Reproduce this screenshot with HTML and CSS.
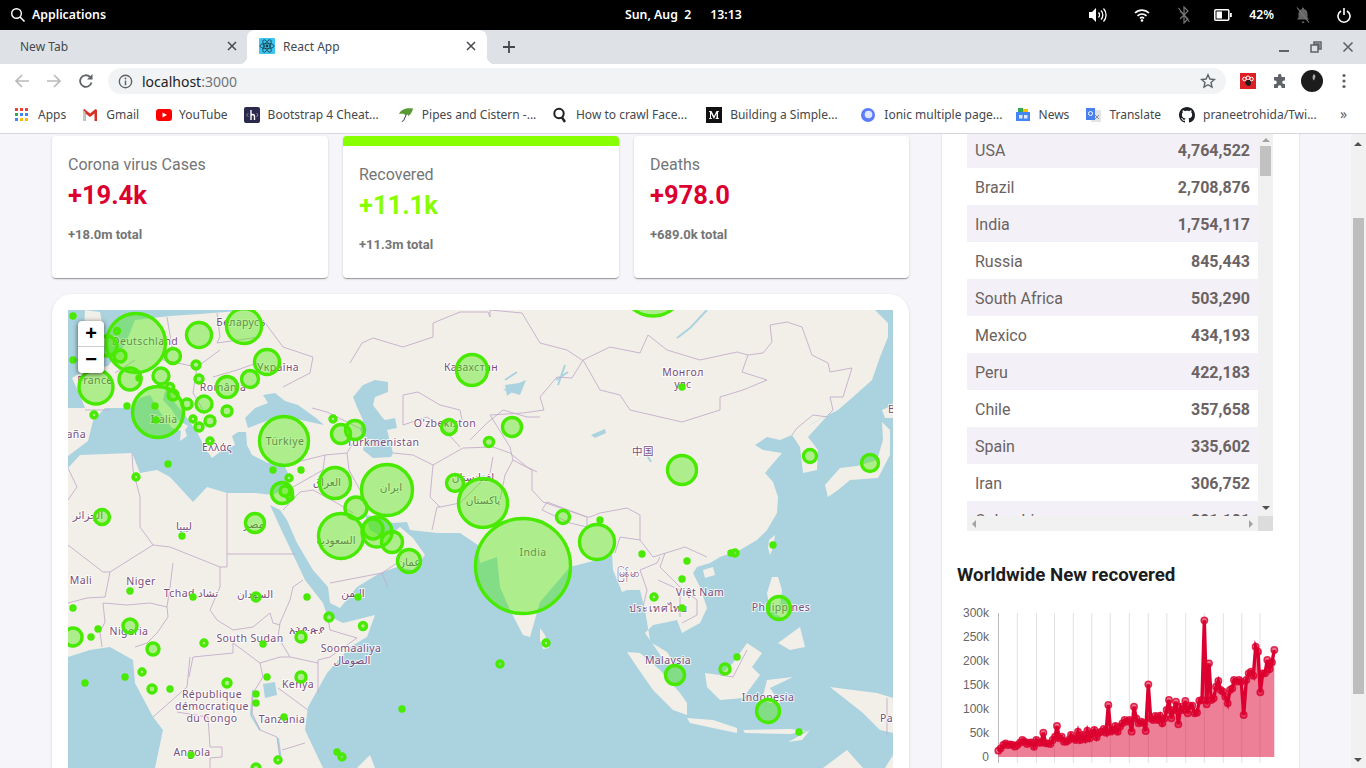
FILE: index.html
```html
<!DOCTYPE html>
<html lang="en">
  <head>
    <meta charset="UTF-8" />
    <title>React App</title>
    <link rel="stylesheet" href="styles.css">
  </head>

  <body>
    <div class="topbar">
      <div class="topbar-left">
        <svg class="ico" width="16" height="16" viewBox="0 0 16 16"><circle cx="6.5" cy="6.5" r="4.8" fill="none" stroke="#fff" stroke-width="1.4"/><path d="M10 10l4.5 4.5" stroke="#fff" stroke-width="1.6"/></svg>
        <span class="apps-label">Applications</span>
      </div>
      <div class="clock"><span>Sun, Aug&nbsp; 2</span><span>13:13</span></div>
      <div class="status">
        <svg class="st-vol" width="20" height="18" viewBox="0 0 20 18"><path d="M1 6h3l4-4v14l-4-4H1z" fill="#fff"/><path d="M10.5 6.5a3.500 3.500 0 0 1 0 5M13 4.500a6.500 6.500 0 0 1 0 9M15.500 2.500a9.500 9.500 0 0 1 0 13" fill="none" stroke="#fff" stroke-width="1.3"/></svg>
        <svg class="st-wifi" width="16" height="14" viewBox="0 0 16 14"><path d="M1 5a10 10 0 0 1 14 0M3.500 7.800a6.500 6.500 0 0 1 9 0M6 10.300a3 3 0 0 1 4 0" fill="none" stroke="#fff" stroke-width="1.700"/><circle cx="8" cy="12.500" r="1.300" fill="#fff"/></svg>
        <svg class="st-bt" width="14" height="18" viewBox="0 0 14 18"><path d="M3 5l8 8-4 4V1l4 4-8 8" fill="none" stroke="#777" stroke-width="1.200"/><path d="M1.500 2l11 14" stroke="#777" stroke-width="1.200"/></svg>
        <svg class="st-bat" width="18" height="12" viewBox="0 0 18 12"><rect x="0.800" y="0.800" width="14" height="10.400" rx="1" fill="none" stroke="#fff" stroke-width="1.500"/><rect x="2.500" y="2.500" width="5.500" height="7" fill="#fff"/><rect x="16" y="4" width="1.800" height="4" fill="#fff"/></svg>
        <span class="st-pct">42%</span>
        <svg class="st-bell" width="16" height="18" viewBox="0 0 16 18"><path d="M8 1.500a1 1 0 0 1 1 1v.6c2.500.6 3.500 2.600 3.500 5v3.400l1.500 2H2l1.500-2V8.100c0-2.400 1-4.400 3.500-5v-.6a1 1 0 0 1 1-1zM6.500 15.500h3a1.500 1.500 0 0 1-3 0z" fill="#666"/><path d="M2 1.500l12 15" stroke="#777" stroke-width="1.200"/></svg>
        <svg class="st-power" width="14" height="16" viewBox="0 0 14 16"><path d="M4 4a6 6 0 1 0 6 0" fill="none" stroke="#fff" stroke-width="1.600"/><path d="M7 1v7" stroke="#fff" stroke-width="1.600"/></svg>
      </div>
    </div>

    <div class="tabstrip">
      <div class="tab">
        <span class="tab-title">New Tab</span>
        <svg class="tab-x" width="10" height="10" viewBox="0 0 10 10"><path d="M1 1l8 8M9 1l-8 8" stroke="#45484c" stroke-width="1.500"/></svg>
      </div>
      <div class="tab tab-active">
        <svg class="favicon" width="16" height="16" viewBox="0 0 16 16"><rect width="16" height="16" rx="1" fill="#3cc5ef"/><g fill="none" stroke="#17404f" stroke-width=".8"><ellipse cx="8" cy="8" rx="7" ry="2.700"/><ellipse cx="8" cy="8" rx="7" ry="2.700" transform="rotate(60 8 8)"/><ellipse cx="8" cy="8" rx="7" ry="2.700" transform="rotate(120 8 8)"/></g><circle cx="8" cy="8" r="1.400" fill="#17404f"/></svg>
        <span class="tab-title">React App</span>
        <svg class="tab-x" width="10" height="10" viewBox="0 0 10 10"><path d="M1 1l8 8M9 1l-8 8" stroke="#45484c" stroke-width="1.500"/></svg>
      </div>
      <svg class="new-tab" width="14" height="14" viewBox="0 0 14 14"><path d="M7 1v12M1 7h12" stroke="#45484c" stroke-width="1.800"/></svg>
      <div class="win-btns">
        <svg width="12" height="12" viewBox="0 0 12 12"><path d="M1 10h10" stroke="#5f6368" stroke-width="2"/></svg>
        <svg width="12" height="12" viewBox="0 0 12 12"><path d="M4 1h7v7H9V3H4zM1 4h7v7H1z" fill="none" stroke="#5f6368" stroke-width="1.500"/></svg>
        <svg width="12" height="12" viewBox="0 0 12 12"><path d="M1.500 1.500l9 9M10.500 1.500l-9 9" stroke="#5f6368" stroke-width="1.600"/></svg>
      </div>
    </div>

    <div class="toolbar">
      <svg class="nav-ico" width="16" height="16" viewBox="0 0 16 16"><path d="M15 8H2M8 2L2 8l6 6" fill="none" stroke="#b8babd" stroke-width="1.700"/></svg>
      <svg class="nav-ico" width="16" height="16" viewBox="0 0 16 16"><path d="M1 8h13M8 2l6 6-6 6" fill="none" stroke="#b8babd" stroke-width="1.700"/></svg>
      <svg class="nav-ico" width="16" height="16" viewBox="0 0 16 16"><path d="M13.500 9.500A5.800 5.800 0 1 1 12 4" fill="none" stroke="#5f6368" stroke-width="1.800"/><path d="M14.500 1v5.500H9z" fill="#5f6368"/></svg>
      <div class="omnibox">
        <svg width="15" height="15" viewBox="0 0 16 16"><circle cx="8" cy="8" r="6.600" fill="none" stroke="#5f6368" stroke-width="1.500"/><path d="M8 7v5" stroke="#5f6368" stroke-width="1.600"/><circle cx="8" cy="4.800" r="1" fill="#5f6368"/></svg>
        <span class="url">localhost<span class="url-port">:3000</span></span>
        <svg class="star" width="16" height="16" viewBox="0 0 16 16"><path d="M8 1.800l1.900 4.200 4.500.5-3.400 3 1 4.500L8 11.700 4 14l1-4.500-3.400-3 4.500-.5z" fill="none" stroke="#5f6368" stroke-width="1.400"/></svg>
      </div>
      <svg class="ext-red" width="16" height="16" viewBox="0 0 16 16"><rect width="16" height="16" fill="#dd1f26"/><circle cx="8" cy="5" r="2" fill="none" stroke="#fff"/><circle cx="4.500" cy="6" r="1.800" fill="none" stroke="#fff"/><circle cx="11.500" cy="6" r="1.800" fill="none" stroke="#fff"/><path d="M5 10l2-3h3l1 3-1 3-3-.5z" fill="#1b1b1b"/></svg>
      <svg class="puzzle" width="16" height="16" viewBox="0 0 16 16"><path d="M6 2.500a1.800 1.800 0 0 1 3.500 0V4H13v3.500h-1a1.800 1.800 0 0 0 0 3.600h1V15H9.500v-1a1.800 1.800 0 0 0-3.600 0v1H2v-3.800h1a1.800 1.800 0 0 0 0-3.600H2V4h4z" fill="#5f6368"/></svg>
      <svg class="avatar" width="22" height="22" viewBox="0 0 22 22"><circle cx="11" cy="11" r="11" fill="#1c1c1c"/><path d="M13 4c1.500 1 1.800 3 .8 4.500l-.8 2-1-1c-.8-2-.5-4 1-5.500z" fill="#aaa"/></svg>
      <svg class="dots" width="4" height="16" viewBox="0 0 4 16"><circle cx="2" cy="2.500" r="1.600" fill="#5f6368"/><circle cx="2" cy="8" r="1.600" fill="#5f6368"/><circle cx="2" cy="13.500" r="1.600" fill="#5f6368"/></svg>
    </div>

    <div class="bookmarks">
      <a class="bm bm-apps">
        <svg width="14" height="14" viewBox="0 0 14 14"><g fill="#ea4335"><rect x="0" y="0" width="3" height="3"/><rect x="5" y="0" width="3" height="3"/><rect x="10" y="0" width="3" height="3"/></g><g fill="#34a853"><rect x="0" y="5" width="3" height="3"/></g><g fill="#4285f4"><rect x="5" y="5" width="3" height="3"/><rect x="10" y="5" width="3" height="3"/><rect x="0" y="10" width="3" height="3"/></g><g fill="#fbbc05"><rect x="5" y="10" width="3" height="3"/><rect x="10" y="10" width="3" height="3"/></g></svg>
        Apps
      </a>
      <a class="bm">
        <svg width="16" height="14" viewBox="0 0 16 14"><path d="M1 2v11h2.500V5.500L8 9l4.500-3.500V13H15V2l-1.500-1L8 5.500 2.500 1z" fill="#d93025"/><path d="M1 13V2l2.500 2v9z" fill="#c5c5c5"/></svg>
        Gmail
      </a>
      <a class="bm">
        <svg width="16" height="12" viewBox="0 0 16 12"><rect width="16" height="12" rx="3" fill="#f00"/><path d="M6.500 3.500v5L11 6z" fill="#fff"/></svg>
        YouTube
      </a>
      <a class="bm bm-long">
        <svg width="16" height="16" viewBox="0 0 16 16"><rect width="16" height="16" rx="2" fill="#2b2a4c"/><path d="M7 3v10M7 8.500c1-1.500 3.500-1.500 3.500 1V13" fill="none" stroke="#fff" stroke-width="1.400"/><path d="M4.500 6L2.500 8l2 2M12.500 6l1.500 2-1.500 2" fill="none" stroke="#9a99b5" stroke-width=".8"/></svg>
        Bootstrap 4 Cheat...
      </a>
      <a class="bm bm-long">
        <svg width="16" height="17" viewBox="0 0 17 17"><path d="M1 8c2-5 8-7 15-6-1 4-3 7-5 8-1-2-2-2-3-1-1-1-3-2-7-1z" fill="#5b9a32"/><path d="M9 8l-3 7-2 1" fill="none" stroke="#333" stroke-width="1"/></svg>
        Pipes and Cistern -...
      </a>
      <a class="bm bm-long">
        <svg width="16" height="16" viewBox="0 0 15 16"><circle cx="6.500" cy="6.500" r="4.700" fill="none" stroke="#202124" stroke-width="2"/><path d="M9.500 10.500l3 4.500" stroke="#202124" stroke-width="2.400"/></svg>
        How to crawl Face...
      </a>
      <a class="bm bm-long">
        <svg width="16" height="16" viewBox="0 0 16 16"><rect width="16" height="16" fill="#111"/><path d="M3 4h2.500L8 9l2.500-5H13v.6l-1 .6v5.600l1 .6v.6H9.500v-.6l1-.6V6.500L8 12 5 6.500v4.300l1 .6v.6H3v-.6l1-.6V5.200l-1-.6z" fill="#fff"/></svg>
        Building a Simple...
      </a>
      <a class="bm bm-long">
        <svg width="16" height="16" viewBox="0 0 15 16"><circle cx="7.500" cy="8" r="7" fill="#5c7cfa"/><circle cx="8" cy="7.500" r="3.800" fill="#dfe6ff"/></svg>
        Ionic multiple page...
      </a>
      <a class="bm">
        <svg width="16" height="16" viewBox="0 0 16 16"><path d="M3 2h10v5H3z" fill="#fbbc05"/><path d="M3 1h5v4H3z" fill="#34a853"/><rect x="1" y="5" width="14" height="9" fill="#4285f4"/><rect x="4" y="8" width="3.500" height="3.500" fill="#dfe8ff"/><rect x="9" y="8" width="3.500" height="3.500" fill="#dfe8ff"/></svg>
        News
      </a>
      <a class="bm">
        <svg width="16" height="16" viewBox="0 0 16 16"><rect x="6" y="3" width="10" height="12" fill="#e2e3e6"/><path d="M1 1h9v12H1z" fill="#4a80ee"/><circle cx="5.500" cy="6.500" r="2" fill="none" stroke="#fff"/><path d="M10 8l4 4M14 8l-4 4" stroke="#777" stroke-width=".8"/></svg>
        Translate
      </a>
      <a class="bm">
        <svg width="16" height="16" viewBox="0 0 16 16"><path fill="#1b1f23" d="M8 0C3.580 0 0 3.580 0 8c0 3.540 2.290 6.530 5.470 7.590.4.070.55-.17.55-.38 0-.19-.01-.82-.01-1.490-2.010.37-2.530-.49-2.690-.94-.09-.23-.48-.94-.82-1.130-.28-.15-.68-.52-.01-.53.63-.01 1.080.58 1.230.82.720 1.210 1.870.87 2.330.66.070-.52.280-.87.510-1.070-1.780-.2-3.640-.89-3.640-3.950 0-.87.310-1.590.820-2.150-.08-.2-.36-1.020.08-2.120 0 0 .67-.21 2.200.82.640-.18 1.320-.27 2-.27s1.360.09 2 .27c1.530-1.040 2.200-.82 2.200-.82.440 1.100.160 1.920.080 2.120.51.560.82 1.270.82 2.150 0 3.070-1.870 3.750-3.650 3.950.29.250.54.730.54 1.480 0 1.070-.01 1.930-.01 2.200 0 .210.150.460.550.380A8.010 8.010 0 0 0 16 8c0-4.420-3.580-8-8-8z"/></svg>
        praneetrohida/Twi...
      </a>
      <span class="bm-more">»</span>
    </div>

    <div class="page">
      <main class="main">
        <div class="cards">
          <div class="card">
            <div class="card-label">Corona virus Cases</div>
            <div class="card-value crimson">+19.4k</div>
            <div class="card-total">+18.0m total</div>
          </div>
          <div class="card card-recovered">
            <div class="card-label">Recovered</div>
            <div class="card-value green">+11.1k</div>
            <div class="card-total">+11.3m total</div>
          </div>
          <div class="card">
            <div class="card-label">Deaths</div>
            <div class="card-value crimson">+978.0</div>
            <div class="card-total">+689.0k total</div>
          </div>
        </div>

        <div class="map-card">
          <div class="map">
            <svg id="worldmap" class="map-svg" width="825" height="458" viewBox="68 310 825 458">
              <rect class="water" x="68" y="310" width="825" height="458"/>
              <g class="land">
                <polygon points="68,408 85,408 80,395 72,378 85,370 108,366 125,345 135,320 170,316 200,314 225,312 250,310 875,310 888,323 888,337 880,357 872,380 853,397 838,410 828,415 813,423 800,432 792,435 780,440 767,437 755,445 763,450 782,453 770,467 765,473 773,482 778,497 777,513 767,530 757,540 740,550 720,557 710,563 697,567 693,573 700,587 707,608 700,623 682,633 677,620 663,623 653,625 645,633 652,643 667,652 677,667 665,662 650,640 645,610 640,590 627,590 622,592 613,570 612,553 597,560 570,567 540,602 530,637 523,635 510,610 500,587 497,557 480,563 478,545 460,533 437,533 410,530 407,522 393,523 377,517 365,515 370,530 382,537 393,533 400,527 413,538 425,555 413,570 397,567 380,573 357,587 340,608 330,603 328,587 313,570 297,543 287,520 280,510 270,505 280,527 297,563 305,580 323,603 327,615 343,623 375,615 367,637 350,647 327,673 308,707 305,730 313,747 323,768 155,768 163,730 153,717 135,683 133,660 110,647 90,650 68,657"/>
                <!-- islands -->
                <polygon points="85,310 100,312 106,345 78,350 84,330"/>
                <polygon points="792,435 800,447 803,473 817,470 818,450 808,437 828,415"/>
                <polygon points="825,485 840,468 857,466 877,460 883,440 882,422 890,430 890,455 878,478 850,480 838,490 828,497"/>
                <polygon points="882,410 893,405 893,418 885,418"/>
                <polygon points="769,540 775,535 773,548 770,555 768,548"/>
                <polygon points="703,570 713,567 715,575 705,578"/>
                <polygon points="767,593 772,577 778,577 782,590 780,607 790,615 785,620 770,610"/>
                <polygon points="778,643 800,627 805,647 790,650"/>
                <polygon points="627,652 640,653 660,670 680,693 687,703 687,715 673,710 653,690 637,667"/>
                <polygon points="687,718 713,720 737,728 737,733 713,728 690,723"/>
                <polygon points="743,730 790,729 807,731 790,734 745,733"/>
                <polygon points="705,673 707,687 720,700 743,698 760,675 752,667 762,653 747,643 733,663 720,675"/>
                <polygon points="767,680 793,677 770,688 780,703 770,703 762,700"/>
                <polygon points="830,687 853,690 877,693 893,698 893,733 880,730 863,713"/>
                <polygon points="788,742 810,730 802,740"/>
                <polygon points="823,768 847,750 863,768"/>
                <polygon points="885,768 893,755 893,768"/>
                <polygon points="540,628 545,635 549,648 543,649 540,640"/>
                <polygon points="357,768 370,755 375,768"/>
                <polygon points="151,448 171,450 168,456 155,453"/>
                <polygon points="131,420 136,420 137,438 131,438"/>
                <polygon points="222,461 240,460 240,463 224,464"/>
                <polygon points="268,456 278,452 276,458"/>
              </g>
              <g class="water-over">
                <!-- mediterranean, black sea, caspian, lakes -->
                <polygon points="68,456 88,441 93,421 105,408 131,408 140,398 150,395 160,412 172,428 181,431 180,441 187,436 185,430 188,426 178,420 172,410 163,400 165,391 170,392 175,403 187,418 197,432 205,448 212,458 220,452 235,445 232,436 238,432 246,432 247,445 252,455 268,463 283,463 288,473 282,490 273,495 255,493 227,493 207,487 193,502 170,477 157,470 140,473 132,453 80,455 68,468"/>
                <polygon points="245,418 255,408 268,403 263,395 275,393 285,401 298,405 316,418 324,425 301,420 281,415 261,423 248,428"/>
                <polygon points="353,397 363,385 375,380 388,382 388,392 375,397 373,405 382,417 385,420 395,418 397,428 387,430 393,453 391,457 373,458 363,450 365,440 360,430 363,420 357,407"/>
                <polygon points="505,385 520,383 523,388 512,392 507,396"/>
                <polygon points="263,684 275,682 277,695 265,698"/>
                <polygon points="591,435 605,429 606,433 595,438"/>
                <polygon points="503,390 526,380 520,395"/>
                <path class="lake-line" d="M677,338L690,328L707,310M253,690L251,715L260,730M278,738L281,760M505,380L517,372M558,385L565,365M568,372L556,380M644,450L651,462"/>
              </g>
              <path class="borders" d="M583,360L610,347L640,353L648,335L667,350L700,360L737,352L748,355L742,372L767,380L743,390L720,397L720,410L682,422L630,410L620,395L600,390L583,360M748,355L763,353L772,342L770,325L787,322L802,327L812,355L828,363L830,372L852,368L843,397L830,397L833,410L828,415M828,417L813,415L797,428L792,435M583,360L572,378L557,377L540,397L544,410L523,413L490,415L510,447L513,460L532,470L532,490L543,502L587,517L590,517L600,513L627,508L640,515L640,540L653,557L685,547L707,557M542,510L547,502L587,517L587,527L570,523L542,510M640,540L620,537L615,553M660,557L657,563L640,570L647,590L643,607M665,553L660,567L680,587L697,600L697,615L682,623M658,580L680,590L680,617M513,460L505,475L500,500M720,675L733,677L747,650M887,698L887,735M350,363L362,343L373,338L403,347L433,337L433,323L460,312L488,312L490,317L490,310L522,313L540,343L567,350L582,360M403,425L403,395L418,392L440,405L460,410L462,420M403,425L427,417L442,427L460,447M393,453L413,455L433,465L430,497L440,507L437,507L432,530M440,507L460,503L480,483L490,473L493,457M433,465L463,448L493,447L510,453L527,467L537,472M470,440L487,423L503,410L527,417L540,417M293,463L325,455L347,453L353,443M325,455L323,470L293,487M347,453L349,470L360,490M283,510L300,492L313,490L337,503L353,513M330,583L382,573L397,563M382,573L388,587M312,408L327,412L347,422L363,430M263,320L283,347L313,357L310,373L283,387M217,313L220,337L217,343L260,337M167,317L172,347L163,360L197,367L220,350M213,377L237,370L257,363M197,367L193,393L203,410M115,373L135,360M85,410L110,410M68,545L103,572L110,572L153,545L170,547L220,567L227,567L227,493M132,453L133,470L140,497L140,527L153,545M68,468L77,487L68,500M227,554L295,554M220,567L220,587L210,610L217,620L233,630L253,627L270,613L273,623L280,625M303,580L293,587L290,600L280,623L278,637L290,657M233,643L260,663L280,657L290,657M193,657L233,653L233,643M189,677L193,657M173,563L170,587L167,607L168,617L157,633L147,643L135,647M167,607L150,603L127,605L103,603L105,622L100,632L102,647M110,572L105,597L87,598L68,603M327,613L330,630L357,638L330,657L318,660L318,693M290,657L318,663M278,688L308,710M260,663L263,677L253,693L252,713L260,730L277,737M190,657L187,687L153,717M177,712L208,717L210,747L222,747L222,757L210,758L210,768M282,750L305,743M277,737L280,760"/>
              <g class="labels">
                <text x="145" y="345">Deutschland</text>
                <text x="95" y="384">France</text>
                <text x="241" y="326">Беларусь</text>
                <text x="278" y="371">Україна</text>
                <text x="223" y="391">România</text>
                <text x="164" y="423">Italia</text>
                <text x="217" y="451">Ελλάς</text>
                <text class="lbl-end" x="86" y="438">España</text>
                <text x="471" y="371">Казахстан</text>
                <text x="445" y="427">O'zbekiston</text>
                <text x="383" y="446">Türkmenistan</text>
                <text x="285" y="445">Türkiye</text>
                <text x="683" y="376">Монгол</text>
                <text x="683" y="388">улс</text>
                <text class="lbl-cjk" x="643" y="455">中国</text>
                <text x="533" y="556">India</text>
                <text x="628" y="577">မြန်မာ</text>
                <text x="700" y="596">Việt Nam</text>
                <text x="658" y="612">ประเทศไทย</text>
                <text x="781" y="611">Philippines</text>
                <text x="668" y="664">Malaysia</text>
                <text x="768" y="701">Indonesia</text>
                <text x="351" y="652">Soomaaliya</text>
                <text x="352" y="664">الصومال</text>
                <text x="298" y="688">Kenya</text>
                <text x="282" y="723">Tanzania</text>
                <text x="212" y="698">République</text>
                <text x="212" y="710">démocratique</text>
                <text x="212" y="722">du Congo</text>
                <text x="192" y="756">Angola</text>
                <text x="250" y="642">South Sudan</text>
                <text x="307" y="634">አትዮጵያ</text>
                <text x="141" y="585">Niger</text>
                <text x="81" y="584">Mali</text>
                <text x="191" y="597">Tchad تشاد</text>
                <text x="129" y="635">Nigeria</text>
                <text x="184" y="530">ليبيا</text>
                <text x="88" y="519">الجزائر</text>
                <text x="254" y="528">مصر</text>
                <text x="255" y="598">السودان</text>
                <text x="353" y="597">اليمن</text>
                <text x="327" y="486">العراق</text>
                <text x="391" y="491">ايران</text>
                <text x="336" y="544">السعودية</text>
                <text x="409" y="566">عمان</text>
                <text x="473" y="481">افغانستان</text>
                <text x="483" y="504">پاکستان</text>
                <text class="lbl-start" x="880" y="722">Papua</text>
                <text class="lbl-start" x="888" y="413">Bei</text>
              </g>
            </svg>
            <div class="zoom-ctl">
              <div class="zoom-btn">+</div>
              <div class="zoom-btn">−</div>
            </div>
          </div>
        </div>
      </main>

      <aside class="side">
        <div class="table-box">
          <div class="table-view">
            <div class="table-rows">
              <div class="row"><span>USA</span><b>4,764,522</b></div>
              <div class="row"><span>Brazil</span><b>2,708,876</b></div>
              <div class="row"><span>India</span><b>1,754,117</b></div>
              <div class="row"><span>Russia</span><b>845,443</b></div>
              <div class="row"><span>South Africa</span><b>503,290</b></div>
              <div class="row"><span>Mexico</span><b>434,193</b></div>
              <div class="row"><span>Peru</span><b>422,183</b></div>
              <div class="row"><span>Chile</span><b>357,658</b></div>
              <div class="row"><span>Spain</span><b>335,602</b></div>
              <div class="row"><span>Iran</span><b>306,752</b></div>
              <div class="row"><span>Colombia</span><b>291,101</b></div>
            </div>
            <div class="vbar">
              <span class="arrow arrow-up"></span>
              <div class="vbar-thumb"></div>
              <span class="arrow arrow-down"></span>
            </div>
          </div>
          <div class="hbar">
            <div class="hbar-track"><span class="arrow arrow-left"></span><span class="arrow arrow-right"></span></div>
            <div class="hbar-corner"></div>
          </div>
        </div>
        <h3 class="chart-title">Worldwide New recovered</h3>
        <svg id="chart" class="chart-svg" width="356" height="168" viewBox="942 600 356 168"></svg>
      </aside>

      <div class="page-scroll">
        <span class="arrow arrow-up"></span>
        <div class="page-thumb"></div>
        <span class="arrow arrow-down"></span>
      </div>
    </div>

    <script src="script.js"></script>
  </body>
</html>
```

FILE: styles.css
```css
* {
  margin: 0;
  padding: 0;
  box-sizing: border-box;
}

body {
  font-family: "Roboto", sans-serif;
  background: #f5f5fa;
  height: 768px;
  overflow: hidden;
}

svg {
  display: block;
  flex-shrink: 0;
}

/* desktop top bar */
.topbar {
  height: 30px;
  background: #000;
  color: #fff;
  font-family: "Noto Sans", sans-serif;
  font-size: 12.3px;
  font-weight: 600;
  line-height: 29px;
  display: flex;
  align-items: flex-start;
  position: relative;
}

.topbar-left {
  display: flex;
  align-items: center;
  gap: 6px;
  padding-left: 10px;
  height: 29px;
}

.clock {
  display: flex;
  gap: 19px;
  margin-left: 519px;
}

.status {
  display: flex;
  align-items: center;
  height: 29px;
  margin-left: auto;
  padding-right: 15px;
}

.st-wifi { margin-left: 26px; }
.st-bt { margin-left: 27px; }
.st-bat { margin-left: 23px; }
.st-pct { margin-left: 17px; }
.st-bell { margin-left: 21px; }
.st-power { margin-left: 26px; }

/* browser */
.tabstrip {
  height: 34px;
  background: #dee1e6;
  display: flex;
  align-items: center;
  font-family: "Noto Sans", sans-serif;
  font-size: 12px;
  color: #45484c;
  position: relative;
}

.tab {
  width: 247px;
  height: 34px;
  display: flex;
  align-items: center;
  padding: 0 10px 2px 20px;
  position: relative;
}

.tab-active {
  width: 240px;
  background: #fff;
  border-radius: 8px 8px 0 0;
  padding-left: 12px;
  padding-right: 11px;
}

.tab-active::before,
.tab-active::after {
  content: "";
  position: absolute;
  bottom: 0;
  width: 8px;
  height: 8px;
}

.tab-active::before {
  left: -8px;
  background: radial-gradient(circle at 0 0, #dee1e6 8px, #fff 8.5px);
}

.tab-active::after {
  right: -8px;
  background: radial-gradient(circle at 100% 0, #dee1e6 8px, #fff 8.5px);
}

.favicon {
  margin-right: 8px;
}

.tab-x {
  margin-left: auto;
}

.new-tab {
  margin-left: 15px;
}

.win-btns {
  display: flex;
  gap: 20px;
  margin-left: auto;
  padding-right: 12px;
}

.toolbar {
  height: 34px;
  background: #fff;
  display: flex;
  align-items: center;
  padding-left: 14px;
}

.nav-ico {
  margin-right: 16px;
}

.nav-ico:nth-child(3) {
  margin-right: 14px;
}

.omnibox {
  width: 1118px;
  height: 26px;
  border-radius: 13px;
  background: #f1f3f4;
  display: flex;
  align-items: center;
  padding: 0 10px;
  font-family: "Noto Sans", sans-serif;
  font-size: 14px;
  color: #202124;
}

.url {
  margin-left: 9px;
}

.url-port {
  color: #70757a;
}

.star {
  margin-left: auto;
}

.ext-red { margin-left: 14px; }
.puzzle { margin-left: 16px; }
.avatar { margin-left: 13px; }
.dots { margin-left: 19px; }

.bookmarks {
  height: 36px;
  background: #fff;
  border-bottom: 1px solid #d5d7db;
  display: flex;
  align-items: center;
  padding: 0 0 2px 15px;
  font-family: "Noto Sans", sans-serif;
  font-size: 12px;
  color: #45484c;
  position: relative;
}

.bm {
  display: flex;
  align-items: center;
  gap: 8px;
  margin-right: 16px;
  white-space: nowrap;
}

.bm-apps {
  gap: 9px;
}

.bm:nth-child(2) {
  margin-right: 17px;
}

.bm:nth-child(3) {
  gap: 7px;
}

.bm:nth-child(10) {
  margin-right: 18px;
}

.bm-long {
  width: 154.2px;
  margin-right: 0;
  flex-shrink: 0;
}

.bm-more {
  position: absolute;
  left: 1340px;
  top: 6px;
  font-size: 14px;
  color: #5f6368;
}

/* page */
.page {
  height: 634px;
  display: flex;
  overflow: hidden;
}

.main {
  width: 857px;
  margin-left: 52px;
  padding-top: 2px;
  flex-shrink: 0;
}

.cards {
  display: flex;
  gap: 15px;
}

.card {
  width: 276px;
  height: 142px;
  flex-shrink: 0;
  background: #fff;
  border-radius: 4px;
  padding: 17px 16px 16px;
  box-shadow: 0 2px 1px -1px rgba(0, 0, 0, 0.2), 0 1px 1px 0 rgba(0, 0, 0, 0.14), 0 1px 3px 0 rgba(0, 0, 0, 0.12);
}

.card:last-child {
  width: 275px;
}

.card-recovered {
  border-top: 10px solid #88ff00;
}

.card-label {
  font-size: 16px;
  line-height: 24px;
  color: #757575;
}

.card-value {
  font-size: 25.5px;
  font-weight: 700;
  line-height: 36px;
}

.crimson { color: #dc0030; }
.green { color: #88ff00; }

.card-total {
  font-size: 13px;
  font-weight: 700;
  line-height: 20px;
  color: #757575;
  margin-top: 12px;
}

.map-card {
  margin-top: 16px;
  background: #fff;
  border-radius: 20px;
  padding: 16px;
  height: 520px;
  box-shadow: 0 1px 3px rgba(0, 0, 0, 0.14);
}

.map {
  position: relative;
  height: 504px;
}

.map-svg {
  display: block;
}

.water { fill: #aad3df; }
.land { fill: #f2efe9; }
.water-over { fill: #aad3df; }

.lake-line {
  fill: none;
  stroke: #aad3df;
  stroke-width: 2;
}

.borders {
  fill: none;
  stroke: #c3aecb;
  stroke-width: 0.9;
}

.labels text {
  font-family: "Noto Sans", "DejaVu Sans", sans-serif;
  font-size: 10.5px;
  letter-spacing: 0.4px;
  fill: #7b4f7d;
  text-anchor: middle;
  stroke: rgba(255, 255, 255, 0.75);
  stroke-width: 2px;
  paint-order: stroke;
}

.labels .lbl-end { text-anchor: end; }
.labels .lbl-start { text-anchor: start; }
.labels .lbl-cjk { font-family: "Noto Sans CJK SC", sans-serif; }

.bubble {
  fill: rgba(72, 234, 0, 0.4);
  stroke: #48ea00;
  stroke-width: 3.4;
}

.zoom-ctl {
  position: absolute;
  left: 10px;
  top: 11px;
  width: 26px;
  background: #fff;
  border-radius: 4px;
  box-shadow: 0 1px 5px rgba(0, 0, 0, 0.65);
  overflow: hidden;
}

.zoom-btn {
  height: 26px;
  font-family: "Liberation Sans", sans-serif;
  font-size: 20px;
  font-weight: 700;
  line-height: 25px;
  text-align: center;
  color: #000;
}

.zoom-btn:first-child {
  border-bottom: 1px solid #ccc;
  height: 26px;
}

/* right column */
.side {
  width: 359px;
  margin-left: 32px;
  background: #fff;
  border-left: 1px solid #e7e7ee;
  border-right: 1px solid #e7e7ee;
  flex-shrink: 0;
}

.table-box {
  width: 306px;
  margin-left: 25px;
}

.table-view {
  height: 382px;
  display: flex;
  overflow: hidden;
}

.table-rows {
  width: 291px;
  margin-top: -3px;
}

.row {
  height: 37px;
  padding: 2px 8px 0 8px;
  display: flex;
  align-items: center;
  justify-content: space-between;
  font-size: 16px;
  color: #6b6363;
}

.row:nth-child(odd) {
  background: #f3f1f7;
}

.row b {
  font-weight: 700;
}

.vbar {
  width: 15px;
  background: #f1f1f1;
  position: relative;
}

.vbar-thumb {
  position: absolute;
  left: 2px;
  top: 12px;
  width: 11px;
  height: 30px;
  background: #c1c1c1;
}

.arrow {
  position: absolute;
  width: 0;
  height: 0;
  border: 4px solid transparent;
}

.vbar .arrow-up {
  left: 4px;
  top: 0;
  border-bottom-color: #a3a3a3;
}

.vbar .arrow-down {
  left: 4px;
  top: 372px;
  border-top-color: #505050;
}

.hbar {
  height: 15px;
  display: flex;
}

.hbar-track {
  width: 291px;
  background: #f1f1f1;
  position: relative;
}

.arrow-left {
  left: 1px;
  top: 4px;
  border-right-color: #a3a3a3;
}

.arrow-right {
  right: 1px;
  top: 4px;
  border-left-color: #a3a3a3;
}

.hbar-corner {
  width: 15px;
  background: #dcdcdc;
}

.chart-title {
  font-size: 18.72px;
  font-weight: 700;
  line-height: 24px;
  color: #1d1d1d;
  margin: 32px 0 13px 15px;
}

.chart-svg text {
  font-family: "Liberation Sans", sans-serif;
  font-size: 12px;
  fill: #666;
}

.chart-svg .ytick {
  text-anchor: end;
}

.grid {
  stroke: #e2e2e2;
  stroke-width: 1;
}

.grid-axis {
  stroke: #bcbcbc;
}

.chart-area {
  fill: rgba(220, 0, 48, 0.5);
  stroke: none;
}

.chart-line {
  fill: none;
  stroke: #dc0030;
  stroke-width: 3.4;
}

.chart-dot {
  fill: rgba(220, 0, 48, 0.55);
  stroke: rgba(220, 0, 48, 0.8);
  stroke-width: 1.5;
}

.page-scroll {
  width: 15px;
  margin-left: auto;
  background: #f1f1f1;
  position: relative;
}

.page-scroll .arrow-up {
  left: 3px;
  top: 4px;
  border-bottom-color: #505050;
}

.page-scroll .arrow-down {
  left: 3px;
  top: 624px;
  border-top-color: #505050;
}

.page-thumb {
  position: absolute;
  left: 2px;
  right: 2px;
  top: 84px;
  height: 476px;
  background: #bdbdbd;
}
```

FILE: script.js
```js
var SVG_NS = "http://www.w3.org/2000/svg";

function el(parent, name, attrs, text) {
  var node = document.createElementNS(SVG_NS, name);
  for (var k in attrs) node.setAttribute(k, attrs[k]);
  if (text) node.textContent = text;
  parent.appendChild(node);
  return node;
}

// x, y, radius of each country on the map
var bubbles = [
  [136,343,29.5],[107,346,10],[120,356,6],[117,331,2.5],[96,387,17],[130,379,11],[139,378,2],[161,376,8],
  [173,356,7.5],[199,335,12.5],[244,326,17.5],[267,362,12.5],[196,365,4],[199,379,4],[250,379,8.5],[227,387,10.5],
  [158,412,25.5],[155,406,2],[156,420,2],[170,387,3.5],[173,395,5],[187,404,5],[204,404,8],[227,411,5],[193,419,3],
  [210,421,5],[199,427,4],[210,441,3],[127,406,2],[94,415,3],[73,316,2],[73,360,2],[168,464,2],[136,477,3],
  [284,441,24.5],[273,470,2],[301,470,2],[472,370,15.5],[449,427,7.5],[512,427,9.5],[489,442,4.5],[333,419,3],
  [341,434,9.5],[355,430,9.5],[335,483,15.5],[387,490,25.5],[455,483,8.5],[483,503,24.5],[356,508,11],[282,493,10.5],
  [285,491,5],[290,497,3],[289,478,3],[341,536,22.5],[377,532,15],[373,529,10],[392,542,10.5],[409,561,11.5],
  [102,517,7.5],[255,523,9.5],[182,536,2],[256,597,4],[193,597,2],[307,597,2],[358,597,2],[329,617,4],[363,626,3.5],
  [130,626,7],[73,637,9],[98,629,2],[91,637,2],[73,608,2],[130,591,2],[204,643,3],[263,644,2],[301,637,5],[153,649,6],
  [142,672,3],[125,677,2],[85,683,2],[152,689,4],[170,689,2],[227,683,4],[267,677,2],[301,677,5],[256,694,2],[256,703,2],
  [284,717,2],[402,709,2],[337,752,2],[342,757,3],[278,760,3],[191,755,2],[256,768,4],[653,285,31],[523,566,47.5],
  [597,542,17.5],[563,517,6.5],[682,470,14.5],[810,456,6.5],[870,463,8.5],[682,387,2],[600,520,2],[642,554,2],[687,561,2],
  [731,553,2],[735,553,3],[773,545,2],[682,579,2],[654,597,3],[682,608,2],[779,608,11.5],[546,643,3],[500,664,3],
  [675,675,9.5],[725,669,5],[737,657,2],[768,711,11.5],[799,732,2]
];

var map = document.getElementById("worldmap");
bubbles.forEach(function (b) {
  el(map, "circle", { class: "bubble", cx: b[0], cy: b[1], r: b[2] });
});

// new recovered per day, read off the graph in zoomed pixels
var series = [
  [175,602],[182,595],[190,585],[197,580],[204,585],[211,583],[218,585],[225,590],[232,585],[240,578],[247,570],[254,575],
  [261,582],[268,578],[275,577],[282,590],[289,570],[296,578],[303,578],[310,548],[317,580],[324,580],[331,582],[338,570],
  [345,560],[351,528],[358,565],[365,560],[372,575],[379,575],[386,570],[393,555],[400,565],[407,570],[414,545],[421,570],
  [428,555],[435,568],[442,542],[449,565],[456,550],[463,540],[470,562],[477,548],[484,545],[491,537],[498,548],[505,465],
  [512,545],[519,540],[526,528],[533,545],[540,530],[547,520],[554,510],[561,515],[568,510],[575,545],[582,470],[589,505],
  [596,520],[603,515],[610,518],[617,543],[625,403],[632,505],[639,510],[646,498],[653,510],[660,497],[667,520],[674,505],
  [680,480],[687,450],[694,505],[701,480],[708,455],[715,523],[722,470],[729,480],[736,453],[743,490],[750,467],[757,467],
  [764,490],[771,488],[778,452],[786,450],[793,211],[800,463],[807,340],[814,450],[821,445],[828,410],[835,393],[842,420],
  [849,425],[856,440],[863,460],[870,420],[877,415],[882,390],[889,395],[897,390],[904,395],[911,495],[919,390],[926,370],
  [933,365],[940,377],[947,290],[954,305],[961,427],[968,370],[975,370],[982,330],[989,357],[996,337],[1003,300]
].map(function (p) {
  return [940 + p[0] / 3, 550 + p[1] / 3];
});

var chart = document.getElementById("chart");
var ticks = [998.5,1017.3,1036.5,1054.5,1073.3,1091.8,1110.3,1129.3,1148.3,1166.8,1185.7,1204.3,1223.3,1241.8,1260];
var tickText = ["1/22","2/9","2/27","3/16","4/3","4/21","5/9","5/27","6/14","7/2","7/20","8/7","8/25","9/12","9/30"];
var yText = ["0","50k","100k","150k","200k","250k","300k"];

ticks.forEach(function (x, i) {
  el(chart, "line", { class: i == 0 ? "grid grid-axis" : "grid", x1: x, x2: x, y1: 613, y2: 763 });
  el(chart, "text", { class: "ytick", transform: "translate(" + (x + 3) + " 773) rotate(-50)" }, tickText[i]);
});

yText.forEach(function (t, i) {
  el(chart, "text", { class: "ytick", x: 989, y: 761 - i * 24 }, t);
});

var pts = series.map(function (p) { return p[0].toFixed(1) + "," + p[1].toFixed(1); }).join(" ");
var first = series[0][0].toFixed(1);
var last = series[series.length - 1][0].toFixed(1);
el(chart, "polygon", { class: "chart-area", points: first + ",757 " + pts + " " + last + ",757" });
el(chart, "polyline", { class: "chart-line", points: pts });
series.forEach(function (p) {
  el(chart, "circle", { class: "chart-dot", cx: p[0], cy: p[1], r: 3.2 });
});
```
